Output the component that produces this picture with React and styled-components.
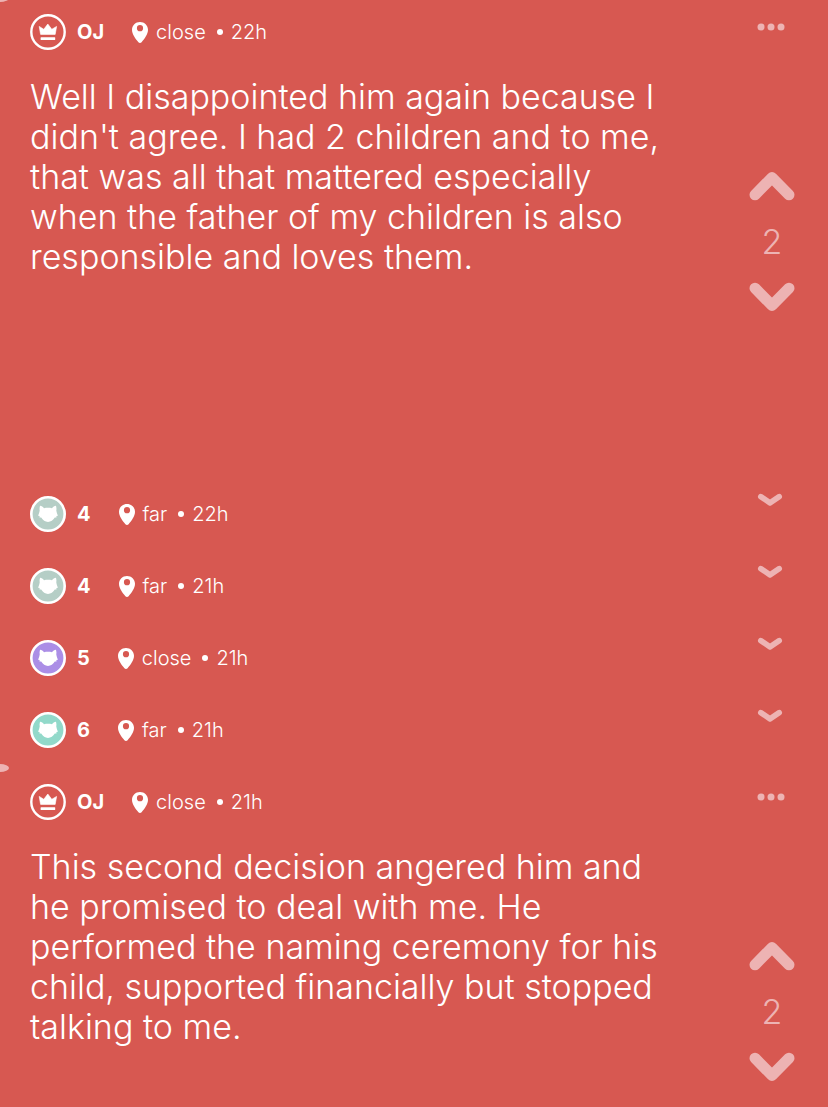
import React from 'react'
import styled, { createGlobalStyle, ThemeProvider } from 'styled-components'

const theme = {
  colors: {
    red: '#d75851',
    white: '#ffffff',
    faded: '#edb3b3',
    sage: '#b5cec6',
    purple: '#ab8ee6',
    mint: '#92d9ca'
  }
}

const firstPost = {
  user: 'OJ',
  distance: 'close',
  time: '22h',
  score: 2,
  text: "Well I disappointed him again because I didn't agree. I had 2 children and to me, that was all that mattered especially when the father of my children is also responsible and loves them."
}

const secondPost = {
  user: 'OJ',
  distance: 'close',
  time: '21h',
  score: 2,
  text: 'This second decision angered him and he promised to deal with me. He performed the naming ceremony for his child, supported financially but stopped talking to me.'
}

const collapsedPosts = [
  { id: 1, user: '4', distance: 'far', time: '22h', color: theme.colors.sage },
  { id: 2, user: '4', distance: 'far', time: '21h', color: theme.colors.sage },
  { id: 3, user: '5', distance: 'close', time: '21h', color: theme.colors.purple },
  { id: 4, user: '6', distance: 'far', time: '21h', color: theme.colors.mint }
]

const GlobalStyle = createGlobalStyle`
  * {
    box-sizing: border-box;
  }
  body {
    margin: 0;
    background: ${theme.colors.red};
    color: ${theme.colors.white};
    font-family: Inter, "Liberation Sans", sans-serif;
  }
`

const Feed = styled.main`
  overflow: hidden;
`

const PostContainer = styled.article`
  position: relative;
  min-height: ${p => p.$tall ? '478px' : '0'};
`

// the end of the thread line that sticks out at the top of every open post
const ThreadMark = styled.span`
  position: absolute;
  top: -6px;
  left: -9px;
  width: 18px;
  height: 8px;
  border-radius: 50%;
  background: ${p => p.theme.colors.faded};
`

const Header = styled.header`
  display: flex;
  align-items: center;
  height: 64px;
  padding-left: 30px;
`

const Meta = styled.div`
  display: flex;
  flex: 1;
  align-items: center;
  font-size: 20px;
  line-height: 24px;
  font-weight: 300;
`

const UserName = styled.strong`
  margin: 0 28px 0 11px;
  font-weight: 700;
`

const Distance = styled.span`
  margin-left: 8px;
`

const Bullet = styled.span`
  width: 6px;
  height: 6px;
  margin: 0 8px 0 11px;
  border-radius: 50%;
  background: ${p => p.theme.colors.white};
`

const IconButton = styled.button`
  display: flex;
  align-items: center;
  justify-content: center;
  padding: 0;
  border: 0;
  background: none;
  color: ${p => p.theme.colors.faded};
  cursor: pointer;
`

const MoreButton = styled(IconButton)`
  align-self: flex-start;
  width: 114px;
  height: 54px;
`

const ExpandButton = styled(IconButton)`
  align-self: flex-start;
  width: 116px;
  height: 44px;
`

const PostBody = styled.div`
  display: flex;
  align-items: flex-start;
  padding: 13px 0 24px 30px;
`

const PostText = styled.p`
  flex: 1;
  margin: 0;
  padding-right: 44px;
  font-size: 34px;
  line-height: 40px;
  font-weight: 300;
`

const Votes = styled.div`
  display: flex;
  flex-direction: column;
  align-items: center;
  width: 112px;
  padding-top: 94px;
`

const Score = styled.span`
  margin: 20px 0;
  color: ${p => p.theme.colors.faded};
  font-size: 34px;
  line-height: 40px;
  font-weight: 300;
`

const CollapsedList = styled.ul`
  margin: 0;
  padding: 0 0 4px;
  list-style: none;
`

const CollapsedRow = styled.li`
  display: flex;
  align-items: center;
  height: 72px;
  padding-left: 30px;
`

function CrownAvatar() {
  return (
    <svg width="36" height="36" viewBox="0 0 36 36" aria-hidden="true">
      <circle cx="18" cy="18" r="16.7" fill="none" stroke="#fff" strokeWidth="2.4" />
      <path d="M9.2 12.4 13.8 15.3 17.8 10 21.8 15.3 26.6 12.4 25.2 20.4H10.6Z" fill="#fff" stroke="#fff" strokeWidth="0.6" strokeLinejoin="round" />
      <rect x="10.6" y="23.2" width="14.6" height="2.8" rx="0.5" fill="#fff" />
    </svg>
  )
}

function CatAvatar({ color }) {
  return (
    <svg width="36" height="36" viewBox="0 0 36 36" aria-hidden="true">
      <circle cx="18" cy="18" r="16.7" fill={color} stroke="#fff" strokeWidth="2.6" />
      <path d="M10 9.8C11.6 10.1 13 11 14 12.2C16.5 11.6 19.5 11.6 22 12.2C23 11 24.4 10.1 26 9.8C26.5 11.6 26.6 13.2 26.3 14.6C26.6 16.3 27 18 27.9 19.7L26.4 20.1L26.5 21.6L24.8 21.6C23.2 24.4 20.7 25.9 18 25.9C15.3 25.9 12.8 24.4 11.2 21.6L9.5 21.6L9.6 20.1L8.1 19.7C9 18 9.4 16.3 9.7 14.6C9.4 13.2 9.5 11.6 10 9.8Z" fill="#fff" />
    </svg>
  )
}

function Pin() {
  return (
    <svg width="16" height="21" viewBox="0 0 16 21" aria-hidden="true">
      <path fillRule="evenodd" d="M8 0C3.5 0 0 3.4 0 7.8C0 12.2 3.5 16.8 6.4 20.2C7.3 21.2 8.7 21.2 9.6 20.2C12.5 16.8 16 12.2 16 7.8C16 3.4 12.5 0 8 0ZM8 3.1A3.1 3.1 0 1 1 8 9.3A3.1 3.1 0 1 1 8 3.1Z" fill="#fff" />
    </svg>
  )
}

function VoteArrow({ down }) {
  return (
    <svg width="46" height="31" viewBox="0 0 46 31" aria-hidden="true">
      <path d={down ? 'M6 6.2 23 23.4 40 6.2' : 'M6 23.8 23 6.6 40 23.8'} fill="none" stroke="currentColor" strokeWidth="11" strokeLinecap="round" strokeLinejoin="round" />
    </svg>
  )
}

function PostMeta({ user, distance, time, children }) {
  return (
    <Meta>
      {children}
      <UserName>{user}</UserName>
      <Pin />
      <Distance>{distance}</Distance>
      <Bullet />
      <time>{time}</time>
    </Meta>
  )
}

function Post({ post, tall }) {
  return (
    <PostContainer $tall={tall}>
      <ThreadMark />
      <Header>
        <PostMeta user={post.user} distance={post.distance} time={post.time}>
          <CrownAvatar />
        </PostMeta>
        <MoreButton aria-label="More">
          <svg width="28" height="8" viewBox="0 0 28 8" fill="currentColor" aria-hidden="true">
            <circle cx="4" cy="4" r="3.5" />
            <circle cx="14" cy="4" r="3.5" />
            <circle cx="24" cy="4" r="3.5" />
          </svg>
        </MoreButton>
      </Header>
      <PostBody>
        <PostText>{post.text}</PostText>
        <Votes>
          <IconButton aria-label="Upvote"><VoteArrow /></IconButton>
          <Score>{post.score}</Score>
          <IconButton aria-label="Downvote"><VoteArrow down /></IconButton>
        </Votes>
      </PostBody>
    </PostContainer>
  )
}

function CollapsedPost({ post }) {
  return (
    <CollapsedRow>
      <PostMeta user={post.user} distance={post.distance} time={post.time}>
        <CatAvatar color={post.color} />
      </PostMeta>
      <ExpandButton aria-label="Expand">
        <svg width="26" height="14" viewBox="0 0 26 14" aria-hidden="true">
          <path d="M3.8 3.6 13 9.9 22.2 3.6" fill="none" stroke="currentColor" strokeWidth="5.6" strokeLinecap="round" strokeLinejoin="round" />
        </svg>
      </ExpandButton>
    </CollapsedRow>
  )
}

function App() {
  return (
    <ThemeProvider theme={theme}>
      <GlobalStyle />
      <Feed>
        <Post post={firstPost} tall />
        <CollapsedList>
          {collapsedPosts.map(post => <CollapsedPost key={post.id} post={post} />)}
        </CollapsedList>
        <Post post={secondPost} />
      </Feed>
    </ThemeProvider>
  )
}

export default App
